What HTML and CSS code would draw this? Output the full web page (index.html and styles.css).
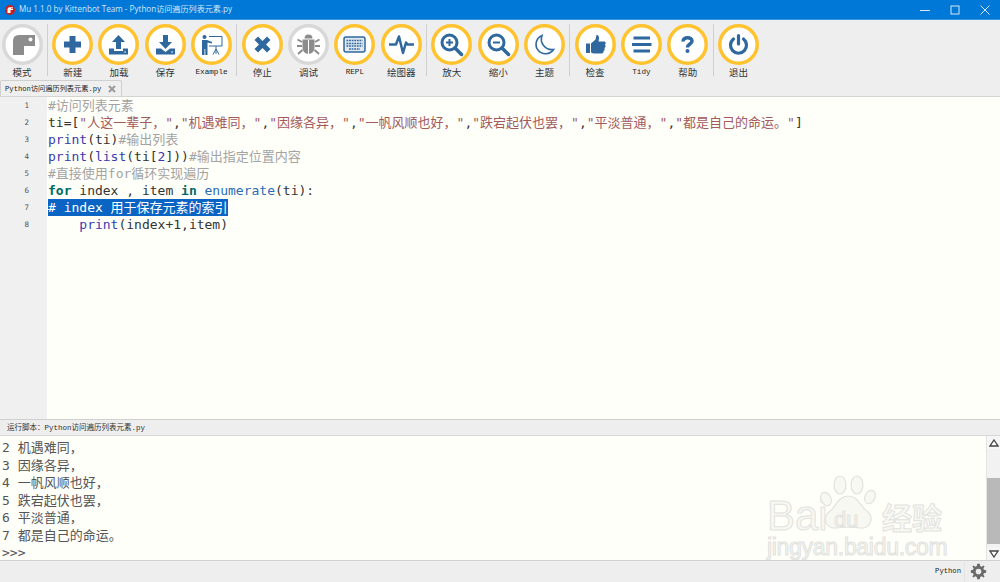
FILE: index.html
```html
<!DOCTYPE html>
<html lang="zh">
<head>
<meta charset="utf-8">
<title>Mu 1.1.0</title>
<link rel="stylesheet" href="styles.css">
</head>
<body>
<div class="app">
  <header class="titlebar">
    <svg class="appicon" viewBox="0 0 10 10"><circle cx="5" cy="5" r="5" fill="#c8201c"/><path d="M2.5 8V4.2A2 2 0 0 1 4.5 2.2H8V5H5.5V8Z" fill="#fff"/><circle cx="7" cy="3.4" r=".7" fill="#c8201c"/></svg>
    <span class="title">Mu 1.1.0 by Kittenbot Team - Python访问遍历列表元素.py</span>
    <div class="winctl">
      <svg viewBox="0 0 10 10"><path d="M0 5.5H10" class="w"/></svg>
      <svg viewBox="0 0 10 10"><rect x="1" y="1" width="8" height="8" class="w"/></svg>
      <svg viewBox="0 0 10 10"><path d="M.5.5L9.5 9.5M9.5.5L.5 9.5" class="w"/></svg>
    </div>
  </header>

  <div class="top">
    <nav class="toolbar">
      <div class="btn"><svg class="ic" viewBox="0 0 41 41"><circle class="ring off" cx="20.5" cy="20.5" r="18.7"/><path class="gr" d="M11 31V17Q11 11 17 11H33V22H22V31Z"/><circle cx="28.5" cy="15.5" r="2" fill="#fff"/></svg><span class="lb">模式</span></div>
      <i class="sep"></i>
      <div class="btn"><svg class="ic" viewBox="0 0 41 41"><circle class="ring" cx="20.5" cy="20.5" r="18.7"/><path class="bl" d="M17.5 12H23.500V17.500H29V23.500H23.500V29H17.500V23.500H12V17.500H17.500Z"/></svg><span class="lb">新建</span></div>
      <div class="btn"><svg class="ic" viewBox="0 0 41 41"><circle class="ring" cx="20.5" cy="20.5" r="18.7"/><path class="bl" d="M20.500 11L27 18H23V25H18V18H14ZM11 24.500H16V27H25V24.500H30V30.500H11Z"/><circle cx="27" cy="28" r=".8" fill="#fff"/></svg><span class="lb">加载</span></div>
      <div class="btn"><svg class="ic" viewBox="0 0 41 41"><circle class="ring" cx="20.5" cy="20.5" r="18.7"/><path class="bl" d="M18 11H23V18H27L20.500 25L14 18H18ZM11 24.500H16L20.500 28L25 24.500H30V30.500H11Z"/><circle cx="27" cy="28" r=".8" fill="#fff"/></svg><span class="lb">保存</span></div>
      <div class="btn"><svg class="ic" viewBox="0 0 41 41"><circle class="ring" cx="20.5" cy="20.5" r="18.7"/><circle class="bl" cx="13.500" cy="13" r="2"/><path class="bl" d="M11 16H16L21 18V19.500L16.500 18.500V31H14.300V25H13.500V31H11Z"/><path class="ln" d="M18 12.500H31V22H18M25 22V25M25 25L22 30.500M25 25L28 30.500M25 25V30"/></svg><span class="lb en">Example</span></div>
      <i class="sep"></i>
      <div class="btn"><svg class="ic" viewBox="0 0 41 41"><circle class="ring" cx="20.5" cy="20.5" r="18.7"/><path class="bl" d="M16 12.500L20.500 17L25 12.500L28.500 16L24 20.500L28.500 25L25 28.500L20.500 24L16 28.500L12.500 25L17 20.500L12.500 16Z"/></svg><span class="lb">停止</span></div>
      <div class="btn"><svg class="ic" viewBox="0 0 41 41"><circle class="ring off" cx="20.5" cy="20.500" r="18.7"/><path class="gr" d="M16.500 14.500A4 4 0 0 1 24.500 14.500ZM14.500 15.500H26.500V24A6 6 0 0 1 14.500 24Z"/><path class="lg" d="M14 18L9.500 15.500M14 22H9M14.500 26L10 30M27 18L31.500 15.500M27 22H32M26.500 26L31 30"/><path d="M20.500 16V30" stroke="#fff" stroke-width="1"/></svg><span class="lb">调试</span></div>
      <div class="btn"><svg class="ic" viewBox="0 0 41 41"><circle class="ring" cx="20.5" cy="20.5" r="18.7"/><rect class="kb" x="10" y="13" width="21" height="15" rx="2"/><path class="kk" d="M12.500 16.500H28.500M12.500 19.500H28.500M12.500 22H28.500M15 25H26"/></svg><span class="lb en">REPL</span></div>
      <div class="btn"><svg class="ic" viewBox="0 0 41 41"><circle class="ring" cx="20.5" cy="20.5" r="18.7"/><path class="pl" d="M8 20.500H15L18 12.500L22 29L25 18.500L26.500 20.500H33"/></svg><span class="lb">绘图器</span></div>
      <i class="sep"></i>
      <div class="btn"><svg class="ic" viewBox="0 0 41 41"><circle class="ring" cx="20.5" cy="20.5" r="18.7"/><circle class="mg" cx="18.500" cy="18.500" r="7.500"/><path class="mh" d="M24 24L30.500 30.500"/><path class="mp" d="M15 18.500H22M18.500 15V22"/></svg><span class="lb">放大</span></div>
      <div class="btn"><svg class="ic" viewBox="0 0 41 41"><circle class="ring" cx="20.5" cy="20.5" r="18.7"/><circle class="mg" cx="18.500" cy="18.500" r="7.500"/><path class="mh" d="M24 24L30.500 30.500"/><path class="mp" d="M15 18.500H22"/></svg><span class="lb">缩小</span></div>
      <div class="btn"><svg class="ic" viewBox="0 0 41 41"><circle class="ring" cx="20.5" cy="20.5" r="18.7"/><path class="mn" d="M18 11.500A9.500 9.500 0 1 0 29.500 25.500A10.500 10.500 0 0 1 18 11.500Z"/></svg><span class="lb">主题</span></div>
      <i class="sep"></i>
      <div class="btn"><svg class="ic" viewBox="0 0 41 41"><circle class="ring" cx="20.5" cy="20.5" r="18.7"/><path class="bl" d="M11 19.500H15V29H11ZM16 19.500L20.500 15.500L21.500 11C24 11 24.500 13.500 23.500 17.500H29.500C31 17.500 31 20 30 20.500C31 21.500 30.500 23.500 29.500 24C30 25.500 29.500 26.500 28.500 27C28.800 28.500 28 29.500 26.500 29.500H20C18 29.500 17 29 16 28.500Z"/></svg><span class="lb">检查</span></div>
      <div class="btn"><svg class="ic" viewBox="0 0 41 41"><circle class="ring" cx="20.5" cy="20.5" r="18.7"/><path class="bl" d="M12.500 12.500H29V15.500H12.500ZM11 19H30.500V22H11ZM12.500 25.500H29V28.500H12.500Z"/></svg><span class="lb en">Tidy</span></div>
      <div class="btn"><svg class="ic" viewBox="0 0 41 41"><circle class="ring" cx="20.5" cy="20.5" r="18.7"/><path class="qm" d="M16 17.500C16 12.500 25 12.500 25 17C25 20 20.500 20 20.500 23.500"/><circle class="bl" cx="20.500" cy="27" r="2"/></svg><span class="lb">帮助</span></div>
      <i class="sep"></i>
      <div class="btn"><svg class="ic" viewBox="0 0 41 41"><circle class="ring" cx="20.5" cy="20.5" r="18.7"/><path class="pw" d="M15.500 15A8 8 0 1 0 25.500 15M20.500 11.500V20"/></svg><span class="lb">退出</span></div>
    </nav>
    <div class="tabs">
      <div class="tab"><span>Python访问遍历列表元素.py</span><svg class="tabx" viewBox="0 0 8 8"><path d="M1 1L7 7M7 1L1 7"/></svg></div>
    </div>
  </div>

  <main class="editor">
    <div class="gutter">
      <div>1</div><div>2</div><div>3</div><div>4</div><div>5</div><div>6</div><div>7</div><div>8</div>
    </div>
    <div class="code">
      <div class="cm">#访问列表元素</div>
      <div>ti=[<span class="st">"人这一辈子，"</span>,<span class="st">"机遇难同，"</span>,<span class="st">"因缘各异，"</span>,<span class="st">"一帆风顺也好，"</span>,<span class="st">"跌宕起伏也罢，"</span>,<span class="st">"平淡普通，"</span>,<span class="st">"都是自己的命运。"</span>]</div>
      <div><span class="fn">print</span>(ti)<span class="cm">#输出列表</span></div>
      <div><span class="fn">print</span>(<span class="fn">list</span>(ti[<span class="fn">2</span>]))<span class="cm">#输出指定位置内容</span></div>
      <div class="cm">#直接使用for循环实现遍历</div>
      <div><b class="kw">for</b> index , item <b class="kw">in</b> <span class="en2">enumerate</span>(ti):</div>
      <div><span class="sel"># index 用于保存元素的索引</span></div>
      <div>    <span class="fn">print</span>(index+1,item)</div>
    </div>
  </main>

  <div class="panehead">运行脚本：Python访问遍历列表元素.py</div>
  <section class="console">
    <div class="out">
      <div>2 机遇难同，</div>
      <div>3 因缘各异，</div>
      <div>4 一帆风顺也好，</div>
      <div>5 跌宕起伏也罢，</div>
      <div>6 平淡普通，</div>
      <div>7 都是自己的命运。</div>
      <div>&gt;&gt;&gt;</div>
    </div>
    <div class="scroll">
      <div class="arrow"><svg viewBox="0 0 10 8"><path d="M5 1L9 7H1Z"/></svg></div>
      <div class="track"><div class="thumb"></div></div>
      <div class="arrow"><svg viewBox="0 0 10 8"><path d="M5 7L9 1H1Z"/></svg></div>
    </div>
    <div class="wm">
      <span class="wm-bai">Bai</span>
      <svg class="wm-paw" viewBox="0 0 60 60"><g class="wp"><ellipse cx="6" cy="25" rx="5" ry="7" transform="rotate(-25 6 25)"/><ellipse cx="20" cy="11" rx="6" ry="9"/><ellipse cx="37" cy="11" rx="6" ry="9"/><ellipse cx="50" cy="23" rx="5" ry="7" transform="rotate(25 50 23)"/><path d="M28 22C38 22 40 32 47 37C55 44 50 55 40 54C32 53 24 53 16 54C6 55 2 44 9 38C16 33 18 22 28 22Z"/></g></svg>
      <span class="wm-du">du</span>
      <span class="wm-cn">经验</span>
      <span class="wm-url">jingyan.baidu.com</span>
    </div>
  </section>

  <footer class="status">
    <span class="mode">Python</span>
    <i class="stsep"></i>
    <svg class="gear" viewBox="0 0 20 20"><path d="M8.500 1H11.500L12 3.600L13.700 4.300L15.900 2.800L17.200 4.100L15.700 6.300L16.400 8L19 8.500V11.500L16.400 12L15.700 13.700L17.200 15.900L15.900 17.200L13.700 15.700L12 16.400L11.500 19H8.500L8 16.400L6.300 15.700L4.100 17.200L2.800 15.900L4.300 13.700L3.600 12L1 11.500V8.500L3.600 8L4.300 6.300L2.800 4.100L4.100 2.800L6.300 4.300L8 3.600ZM10 6.700A3.300 3.300 0 1 0 10 13.300A3.300 3.300 0 1 0 10 6.700Z"/></svg>
  </footer>
</div>
</body>
</html>
```
FILE: styles.css
```css
* { box-sizing: border-box; }
html, body { margin: 0; height: 100%; overflow: hidden; }
body { font-family: "Noto Sans CJK SC", sans-serif; color: #333; background: #eee; }
.app { width: 1000px; height: 582px; display: flex; flex-direction: column; }

.titlebar { height: 20px; flex: none; background: #0078d7; border-bottom: 1px solid #3a94dc; display: flex; align-items: center; padding-left: 5px; color: #d5e7f7; }
.appicon { width: 10px; height: 10px; flex: none; }
.title { margin-left: 4px; font: 8.100px/1 "Open Sans", "Noto Sans CJK SC", sans-serif; white-space: nowrap; }
.winctl { margin-left: auto; display: flex; gap: 20px; padding-right: 10px; }
.winctl svg { width: 10px; height: 10px; }
.w { fill: none; stroke: #d5e7f7; stroke-width: 1; }

.top { height: 77px; flex: none; background: #eee; border-bottom: 1px solid #d4d4d4; position: relative; display: flex; flex-direction: column; }
.toolbar { display: flex; gap: 2.3px; padding-top: 4px; height: 61px; }
.btn { width: 44px; flex: none; display: flex; flex-direction: column; align-items: center; }
.ic { width: 41px; height: 41px; flex: none; }
.lb { height: 14px; font-size: 9.500px; line-height: 14px; white-space: nowrap; color: #333; }
.lb.en { font-family: "Liberation Mono", monospace; font-size: 7.700px; color: #222; }
.sep { width: 1px; height: 52px; margin: 0 .55px; background: #cfcfcf; flex: none; }

.ring { fill: #fff; stroke: #fec32e; stroke-width: 3.500; }
.ring.off { stroke: #d8d8d8; }
.bl { fill: #2f689f; }
.gr { fill: #8c8c8c; }
.ln { fill: none; stroke: #2f689f; stroke-width: 1; }
.lg { fill: none; stroke: #8c8c8c; stroke-width: 2; }
.kb { fill: #dfe7ef; stroke: #2f689f; stroke-width: 1.500; }
.kk { fill: none; stroke: #2f689f; stroke-width: 1.300; stroke-dasharray: 1.800 .8; }
.pl { fill: none; stroke: #2f689f; stroke-width: 2.500; stroke-linejoin: round; }
.mg { fill: none; stroke: #2f689f; stroke-width: 3; }
.mh { fill: none; stroke: #2f689f; stroke-width: 3.500; stroke-linecap: round; }
.mp { fill: none; stroke: #2f689f; stroke-width: 2; }
.mn { fill: #fff; stroke: #2f689f; stroke-width: 1.600; }
.qm { fill: none; stroke: #2f689f; stroke-width: 3.500; }
.pw { fill: none; stroke: #2f689f; stroke-width: 3.200; stroke-linecap: round; }

.tabs { display: flex; height: 16px; }
.tab { width: 122px; height: 16px; border: 1px solid #cfcfcf; border-bottom: none; border-radius: 2px 2px 0 0; background: #efefef; display: flex; align-items: center; padding-left: 4px; font: 7.200px/14px "Liberation Mono", "Noto Sans CJK SC", monospace; white-space: nowrap; color: #222; }
.tabx { width: 8px; height: 8px; margin-left: 7px; flex: none; }
.tabx path { fill: none; stroke: #9a9a9a; stroke-width: 2; }

.editor { flex: none; height: 323px; display: flex; background: #fffffa; border-bottom: 1px solid #d0d0d0; }
.gutter { width: 47px; flex: none; background: #f0f0f0; font: 7.500px/17px "DejaVu Sans Mono", monospace; text-align: right; padding-right: 18px; color: #555; }
.code { flex: 1; font: 13px/17px "DejaVu Sans Mono", "Noto Sans CJK SC", monospace; color: #333; padding-left: 1px; }
.code > div { height: 17px; white-space: pre; }
.cm { color: #a3a3a3; }
.st { color: #a25a5a; }
.fn { color: #3a3ab0; }
.kw { color: #006a6a; }
.en2 { color: #2a6cb4; }
.sel { background: #0a64c4; color: #fff; display: inline-block; height: 17px; }

.panehead { height: 16px; flex: none; padding-left: 7px; font: 7.500px/16px "Liberation Mono", "Noto Sans CJK SC", monospace; color: #333; background: #eee; border-bottom: 1px solid #d8d8d8; white-space: nowrap; }

.console { height: 125px; flex: none; background: #fffffa; border-bottom: 1px solid #d0d0d0; display: flex; position: relative; overflow: hidden; }
.out { flex: 1; padding: 3px 0 0 2px; font: 13px/17.500px "DejaVu Sans Mono", "Noto Sans CJK SC", monospace; color: #555; }
.out > div { height: 17.500px; white-space: pre; }
.scroll { width: 14px; flex: none; display: flex; flex-direction: column; background: #f2f2f2; border-left: 1px solid #e4e4e4; }
.arrow { height: 13px; flex: none; display: flex; align-items: center; justify-content: center; background: #f6f6f6; }
.arrow svg { width: 10px; height: 8px; }
.arrow path { fill: #fff; stroke: #444; stroke-width: 1.300; }
.track { flex: 1; padding-top: 29px; padding-bottom: 2px; }
.thumb { height: 66px; background: #b9b9b9; }

.wm { position: absolute; left: 766px; top: 38px; width: 190px; height: 86px; font-family: "Liberation Sans", sans-serif; }
.wm span { position: absolute; -webkit-text-stroke: 1px #e2e2de; white-space: nowrap; color: #f8f8f3; }
.wm-bai { left: 1px; top: 18px; font-size: 42px; line-height: 48px; }
.wm-du { left: 68px; top: 33px; font-size: 22px; line-height: 26px; }
.wm-cn { left: 116px; top: 24px; font: 700 30px/36px "Noto Sans CJK SC", sans-serif; }
.wm-url { left: 1px; top: 61px; font-size: 23px; line-height: 25px; letter-spacing: -.3px; }
.wm-paw { position: absolute; left: 54px; top: 0; width: 60px; height: 60px; }
.wp > * { fill: #f8f8f3; stroke: #e2e2de; stroke-width: 1.200; }

.status { flex: 1; display: flex; align-items: center; justify-content: flex-end; padding-right: 13px; background: #eee; }
.mode { font: 7.200px/1 "Liberation Mono", monospace; color: #222; }
.stsep { width: 1px; height: 20px; margin: 0 2px 0 3px; background: #e4e4e4; }
.gear { width: 17px; height: 17px; margin-left: 3px; }
.gear path { fill: #6a6a6a; fill-rule: evenodd; }
```
